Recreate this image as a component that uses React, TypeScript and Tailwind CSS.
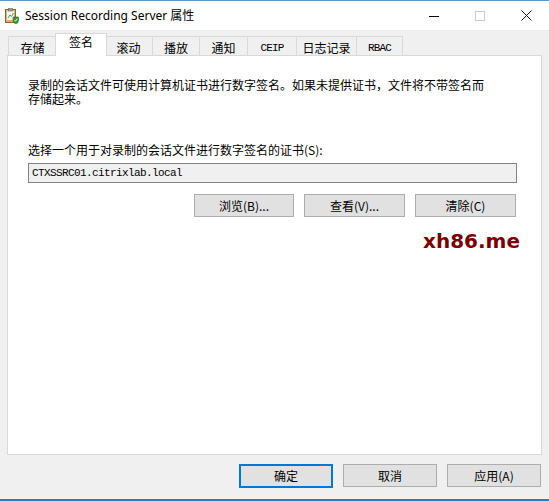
import React from 'react';

const cjk = 'font-["Noto_Sans_CJK_SC",sans-serif]';

function TitleIcon() {
  return (
    <svg width="14" height="16" viewBox="0 0 14 16" className="mt-[1px]">
      <rect x="0.5" y="1.5" width="10" height="13" fill="#d9b56a" stroke="#8a6a2a" />
      <rect x="2" y="3" width="7" height="9" fill="#f4f4f4" />
      <rect x="3.5" y="0.5" width="4" height="2.5" fill="#9a9a9a" stroke="#6a6a6a" strokeWidth="0.6" />
      <path d="M3 10 L5 7 L6.5 8.5 L8.5 5" stroke="#2fa84f" strokeWidth="1" fill="none" />
      <path d="M8 9 L13.5 9 L13.5 12.5 Q13.5 15 10.75 15.8 Q8 15 8 12.5 Z" fill="#2f9e2f" stroke="#1d6e1d" strokeWidth="0.6" />
      <path d="M9.5 12 L10.5 13.2 L12.3 10.8" stroke="#ffffff" strokeWidth="0.9" fill="none" />
    </svg>
  );
}

function Tab({ label, w, selected, mono }: { label: string; w: number; selected?: boolean; mono?: boolean }) {
  const font = mono ? 'font-["Liberation_Mono",monospace] text-[11px] tracking-[-0.8px]' : `${cjk} text-[12px]`;
  if (selected) {
    return (
      <div
        style={{ width: w }}
        className={`relative z-10 -mx-[2px] -mb-[1px] flex h-[23px] justify-center border border-b-0 border-[#d9d9d9] bg-white pt-[1px] leading-[14px] text-black ${font}`}
      >
        {label}
      </div>
    );
  }
  return (
    <div
      style={{ width: w }}
      className={`flex h-[19px] items-start justify-center border border-b-0 border-l-0 first:border-l border-[#d9d9d9] bg-[#f0f0f0] pt-[4px] leading-[14px] text-black ${font}`}
    >
      {label}
    </div>
  );
}

function Btn({ children, w, primary }: { children: React.ReactNode; w: number; primary?: boolean }) {
  return (
    <div
      style={{ width: w }}
      className={`flex h-[23px] items-center justify-center bg-[#e1e1e1] text-[12px] text-black ${cjk} ${
        primary ? 'h-[24px] border-2 border-[#0078d7]' : 'border border-[#adadad]'
      }`}
    >
      {children}
    </div>
  );
}

export default function App() {
  return (
    <div className="flex h-[501px] w-[549px] flex-col overflow-hidden border-b-2 border-[#2b7cc4] bg-[#f0f0f0]">
      {/* title bar */}
      <div className="flex h-[30px] shrink-0 items-center border-t border-[#5b9bd5] bg-white pl-[5px]">
        <TitleIcon />
        <span className='ml-[6px] font-["Noto_Sans",sans-serif] text-[12px] text-black'>
          Session Recording Server <span className={cjk}>属性</span>
        </span>
        <div className="ml-auto flex h-full items-center">
          <div className="flex w-[46px] justify-center">
            <div className="mt-[1px] h-px w-[10px] bg-black" />
          </div>
          <div className="flex w-[46px] justify-center">
            <div className="h-[10px] w-[10px] border border-[#cccccc]" />
          </div>
          <div className="flex w-[46px] justify-center">
            <svg width="11" height="11" viewBox="0 0 11 11">
              <path d="M0.5 0.5 L10.5 10.5 M10.5 0.5 L0.5 10.5" stroke="#111" strokeWidth="1" />
            </svg>
          </div>
        </div>
      </div>

      {/* tabs */}
      <div className="mt-[4px] flex h-[21px] items-end pl-[8px]">
        <Tab label="存储" w={49} />
        <Tab label="签名" w={52} selected />
        <Tab label="滚动" w={48} />
        <Tab label="播放" w={47} />
        <Tab label="通知" w={48} />
        <Tab label="CEIP" w={49} mono />
        <Tab label="日志记录" w={60} />
        <Tab label="RBAC" w={46} mono />
      </div>

      {/* panel */}
      <div className="mx-[7px] flex h-[400px] flex-col border border-[#d9d9d9] bg-white pl-[20px] pr-[21px]">
        <div className={`mt-[22px] text-[12px] leading-[14px] text-black ${cjk}`}>
          <div>录制的会话文件可使用计算机证书进行数字签名。如果未提供证书，文件将不带签名而</div>
          <div>存储起来。</div>
        </div>
        <p className={`mt-[37px] text-[12px] leading-[14px] text-black ${cjk}`}>
          选择一个用于对录制的会话文件进行数字签名的证书(S):
        </p>
        <div className="mt-[6px] flex h-[20px] w-[489px] items-center border border-[#838383] bg-[#f0f0f0] pl-[3px]">
          <span className='font-["Liberation_Mono",monospace] text-[11px] tracking-[-0.6px] text-black'>
            CTXSSRC01.citrixlab.local
          </span>
        </div>
        <div className="mt-[11px] flex w-[488px] justify-end gap-[10px]">
          <Btn w={100}>浏览(B)...</Btn>
          <Btn w={101}>查看(V)...</Btn>
          <Btn w={101}>清除(C)</Btn>
        </div>
        <div className='mt-[14px] self-end font-["DejaVu_Sans",sans-serif] text-[20px] font-bold leading-[20px] text-[#7a0000]'>
          xh86.me
        </div>
      </div>

      {/* bottom buttons */}
      <div className="mt-[9px] flex justify-end gap-[10px] pr-[8px]">
        <Btn w={94} primary>
          确定
        </Btn>
        <Btn w={94}>取消</Btn>
        <Btn w={94}>应用(A)</Btn>
      </div>
    </div>
  );
}
